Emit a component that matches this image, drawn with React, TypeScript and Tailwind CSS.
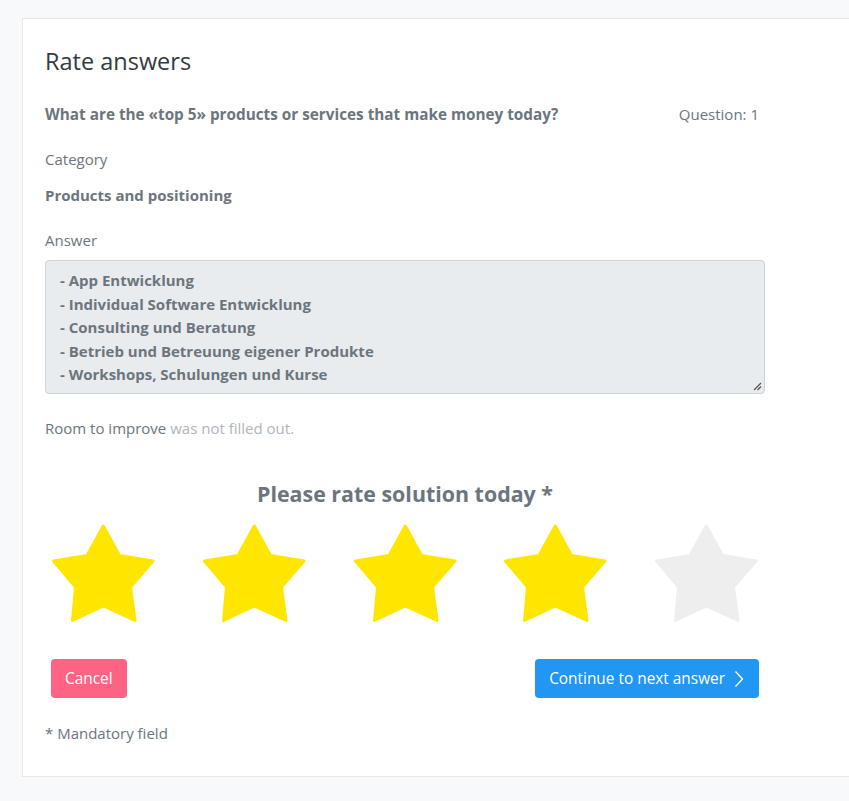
import React from "react";

const Star = ({ filled }: { filled: boolean }) => (
  <svg width="104" height="100" viewBox="0 0 104 100" className="shrink-0">
    <polygon
      points="52.3,3 36,32.5 2.5,38 24.5,64 21.5,97.5 52.3,83 84,97.5 79.5,64 102,38 68.5,32.5"
      fill={filled ? "#ffe600" : "#eeeeee"}
      stroke={filled ? "#ffe600" : "#eeeeee"}
      strokeWidth="3"
      strokeLinejoin="round"
    />
  </svg>
);

export default function App() {
  const lines = [
    "- App Entwicklung",
    "- Individual Software Entwicklung",
    "- Consulting und Beratung",
    "- Betrieb und Betreuung eigener Produkte",
    "- Workshops, Schulungen und Kurse",
  ];
  return (
    <div
      className="min-h-[801px] w-[849px] overflow-hidden bg-[#f8f9fa] pt-[18px] pl-[22px]"
      style={{ fontFamily: '"Open Sans", "Noto Sans", sans-serif' }}
    >
      <div className="w-[860px] border border-[#e5e7eb] bg-white pl-[22px] pt-[26px] pb-[32px]">
        <div className="w-[720px]">
          <h1 className="text-[23.5px] leading-[32px] text-[#343a40]">Rate answers</h1>
          <div className="mt-[26px] flex items-center justify-between pr-[6px] text-[15px] leading-[22px]">
            <span className="text-[15.3px] font-bold text-[#6c757d]">
              What are the «top 5» products or services that make money today?
            </span>
            <span className="text-[#6c757d]">Question: 1</span>
          </div>
          <div className="mt-[23px] text-[15px] leading-[22px] text-[#6c757d]">Category</div>
          <div className="mt-[14px] text-[15px] font-bold leading-[22px] text-[#6c757d]">
            Products and positioning
          </div>
          <div className="mt-[23px] text-[15px] leading-[22px] text-[#6c757d]">Answer</div>
          <div className="relative mt-[9px] h-[134px] rounded-[4px] border border-[#ced4da] bg-[#e9ecef] pl-[14px] pt-[8px]">
            {lines.map((l) => (
              <div key={l} className="text-[15px] font-bold leading-[23.5px] text-[#6c757d]">
                {l}
              </div>
            ))}
            <svg width="10" height="10" viewBox="0 0 10 10" className="absolute bottom-[2px] right-[2px]">
              <path d="M9 2 L2 9 M9 5.5 L5.5 9" stroke="#555" strokeWidth="1.3" />
            </svg>
          </div>
          <div className="mt-[23px] text-[15px] leading-[22px]">
            <span className="text-[#6c757d]">Room to improve</span>{" "}
            <span className="text-[#adb5bd]">was not filled out.</span>
          </div>
          <div className="mt-[41px] text-center text-[21.4px] font-bold leading-[28px] text-[#6c757d]">
            Please rate solution today *
          </div>
          <div className="mt-[15px] flex gap-[46.75px] pl-[6px]">
            <Star filled />
            <Star filled />
            <Star filled />
            <Star filled />
            <Star filled={false} />
          </div>
          <div className="mt-[36px] flex justify-between px-[6px]">
            <button className="h-[39px] rounded-[4px] bg-[#ff6384] px-[14px] text-[15.4px] text-white">
              Cancel
            </button>
            <button className="flex h-[39px] items-center gap-[9px] rounded-[4px] bg-[#2196f3] pl-[14px] pr-[15px] text-[15.4px] text-white">
              Continue to next answer
              <svg width="10" height="18" viewBox="0 0 10 18">
                <path d="M1.5 1.5 L8.5 9 L1.5 16.5" stroke="white" strokeWidth="1.4" fill="none" />
              </svg>
            </button>
          </div>
          <div className="mt-[24px] text-[15px] leading-[22px] text-[#6c757d]">* Mandatory field</div>
        </div>
      </div>
    </div>
  );
}
